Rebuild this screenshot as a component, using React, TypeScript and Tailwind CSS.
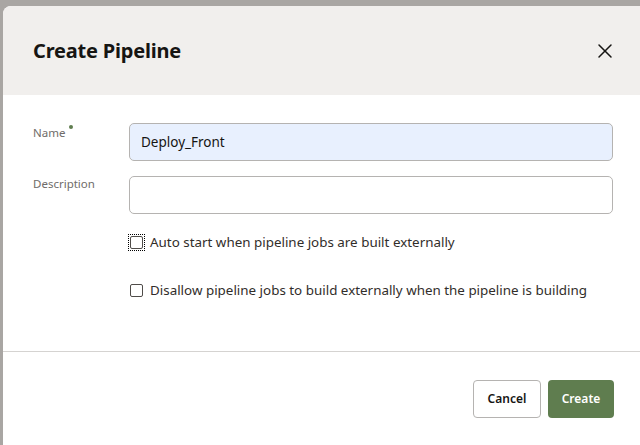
import { X } from "lucide-react";

const font = { fontFamily: '"Noto Sans", "Open Sans", sans-serif' };

function Checkbox({ label, focused }: { label: string; focused?: boolean }) {
  return (
    <label className="flex items-center h-[14px]">
      <span className={`flex items-center justify-center w-[15px] h-[15px] ${focused ? "outline outline-1 outline-dotted outline-[#000]" : ""}`}>
        <span className="block w-[13px] h-[13px] rounded-[2px] border border-[#4f4c49] bg-white" />
      </span>
      <span className="ml-[6px] mt-[2px] text-[13.4px] text-[#312d2a] leading-none">{label}</span>
    </label>
  );
}

export default function App() {
  return (
    <div className="w-[640px] h-[445px] overflow-hidden bg-[#a9a6a3] pl-[3px] pt-[6px]" style={font}>
      <div className="w-[660px] h-[445px] bg-white rounded-tl-[8px] overflow-hidden">
        {/* header */}
        <div className="h-[89px] bg-[#f1efed] flex items-center justify-between pl-[30px] pr-[46px]">
          <h1 className="text-[20px] font-bold text-[#161513] tracking-[-0.2px] leading-none">Create Pipeline</h1>
          <X className="w-[24px] h-[24px] text-[#161513]" strokeWidth={1.5} />
        </div>

        {/* body */}
        <div className="pl-[30px] pr-[50px] pt-[28px] h-[256px]">
          <div className="flex">
            <div className="w-[96px] pt-[4px] text-[11.5px] text-[#6f6c69] leading-none flex">
              Name
              <span className="ml-[4px] -mt-[2px] w-[4px] h-[4px] rounded-full bg-[#5f7d4f]" />
            </div>
            <div className="flex-1 h-[38px] rounded-[5px] border border-[#b5b3b1] bg-[#e8f0fe] flex items-center px-[11px] text-[13.5px] text-[#161513]">
              Deploy_Front
            </div>
          </div>
          <div className="flex mt-[15px]">
            <div className="w-[96px] pt-[2px] text-[11.5px] text-[#6f6c69] leading-none">Description</div>
            <div className="flex-1 h-[38px] rounded-[5px] border border-[#b5b3b1] bg-white" />
          </div>
          <div className="ml-[96px] mt-[21px] flex flex-col gap-[34px]">
            <Checkbox label="Auto start when pipeline jobs are built externally" focused />
            <Checkbox label="Disallow pipeline jobs to build externally when the pipeline is building" />
          </div>
        </div>

        <div className="h-px bg-[#d5d3d1] w-full" />

        {/* footer */}
        <div className="flex justify-start pl-[470px] pt-[28px] gap-[7px]">
          <button className="w-[68px] h-[38px] rounded-[4px] border border-[#b5b3b1] bg-white text-[12px] font-semibold text-[#161513]">Cancel</button>
          <button className="w-[66px] h-[38px] rounded-[4px] bg-[#5f7d4f] text-[12px] font-semibold text-white">Create</button>
        </div>
      </div>
    </div>
  );
}
